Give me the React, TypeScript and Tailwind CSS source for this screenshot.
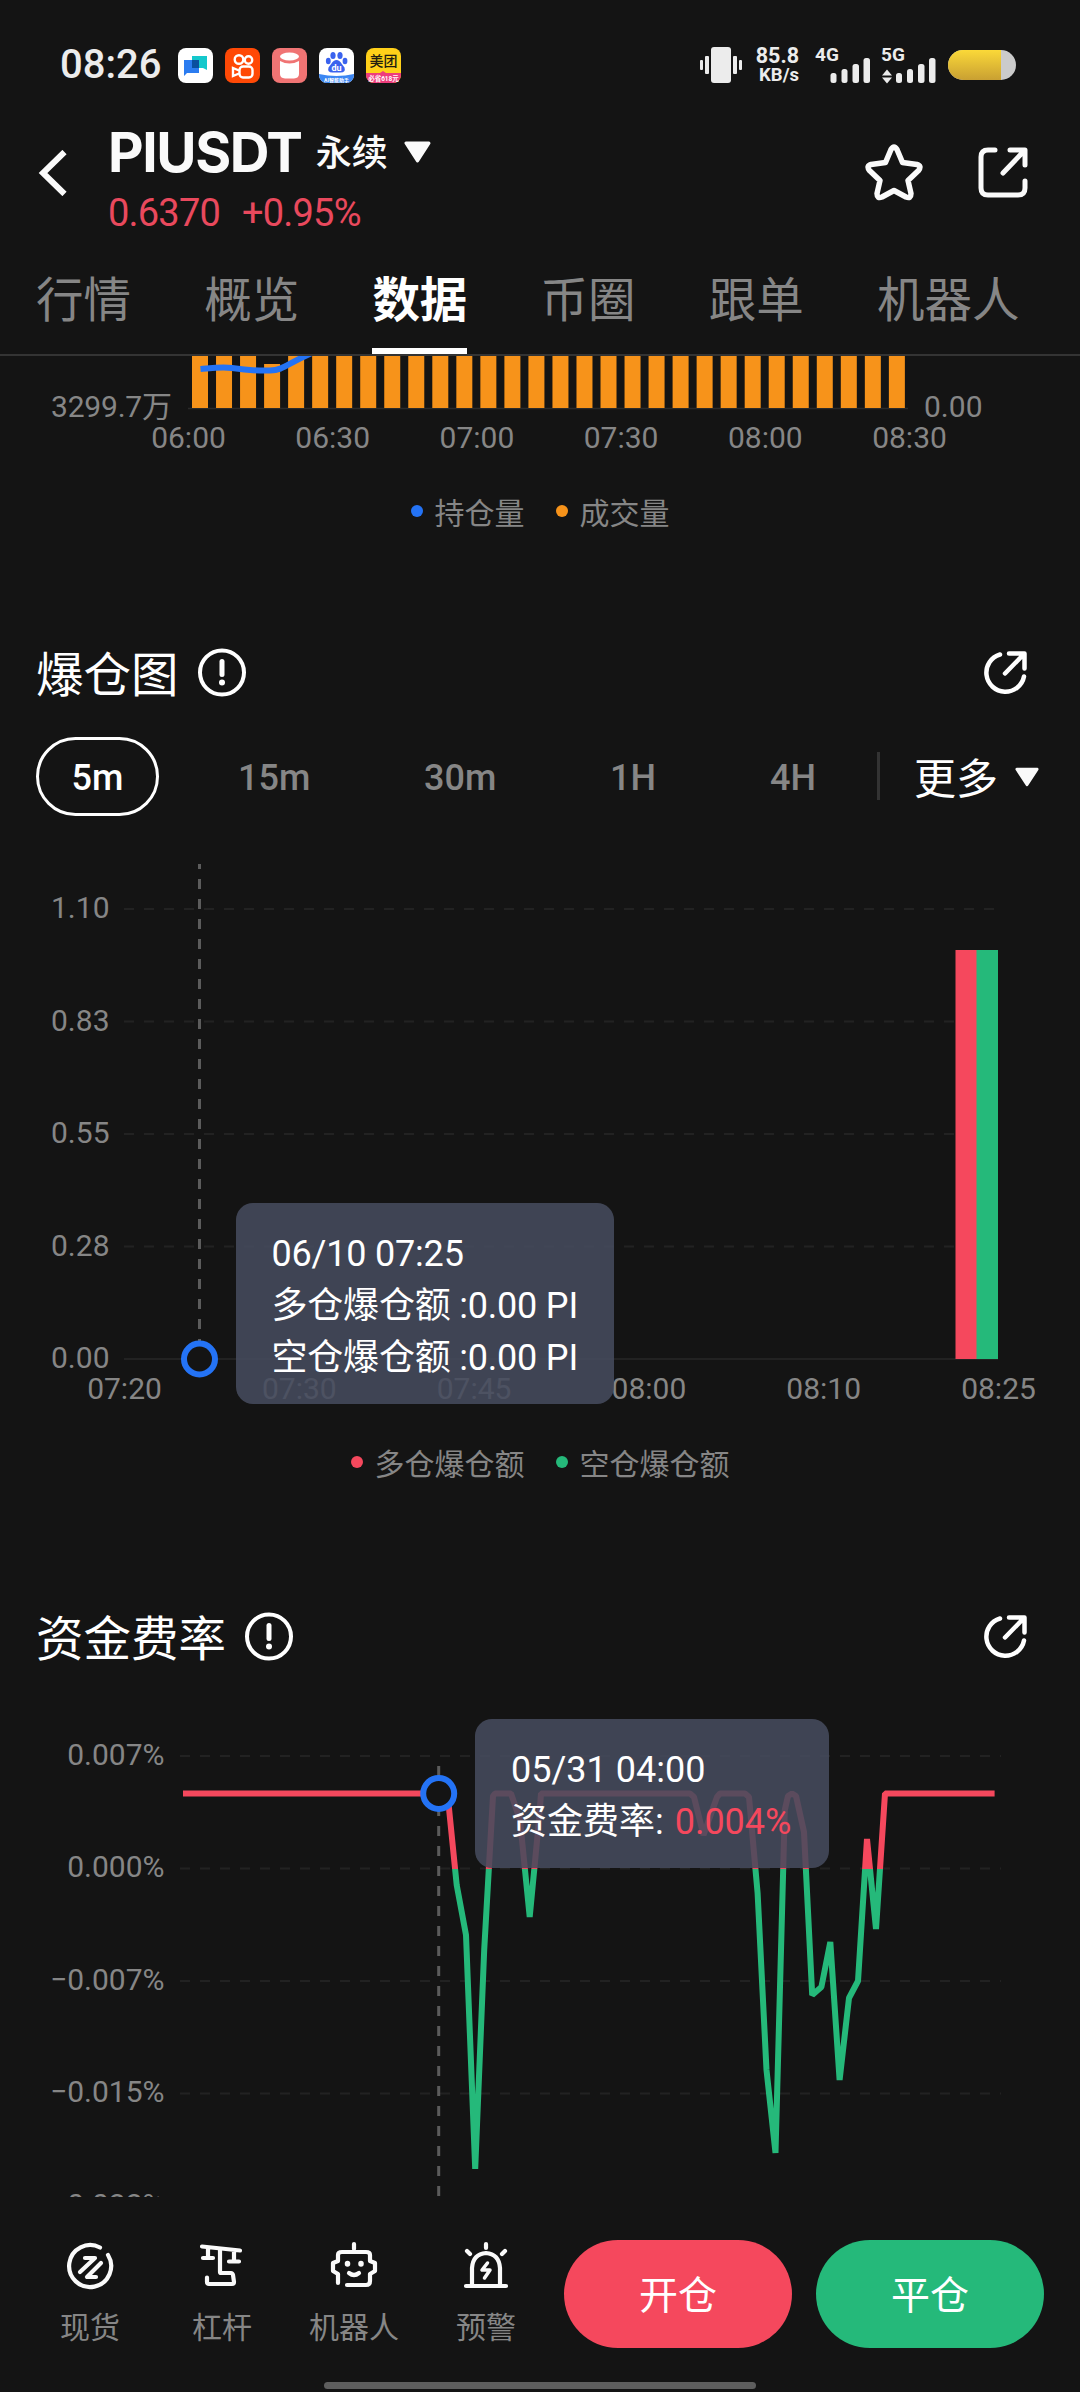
import React from "react";

const RED = "#f5485d";
const GREEN = "#25b97a";
const BLUE = "#2473f5";
const ORANGE = "#f7931a";
const LABEL = "#868686";

const TABS = ["行情", "概览", "数据", "币圈", "跟单", "机器人"];
const VOLUME_TIMES = ["06:00", "06:30", "07:00", "07:30", "08:00", "08:30"];
const VOLUME_BARS = Array.from({ length: 30 }, (_, i) => (i === 3 ? 44 : 52));
const LIQ_LEVELS = ["1.10", "0.83", "0.55", "0.28", "0.00"];
const LIQ_TIMES = ["07:20", "07:30", "07:45", "08:00", "08:10", "08:25"];
const FUNDING_LEVELS = ["0.007%", "0.000%", "−0.007%", "−0.015%", "−0.022%"];

// funding rate series in chart units
const FUNDING_POINTS =
  "183,83.5 447.5,83.5 456.7,175 466,225 475.2,459 484.2,240 493,86 495,83.5 511,83.5 520,110 529.7,207 539,110 541,83.5 690,83.5 694,87 703.5,125 717,87 720,83.5 745,83.5 749,87 757.6,183 766.5,360 775.5,443 784.8,100 788,86 792,83.5 796,86 804,122 812.2,285 821.4,277 830.3,232 839.6,370 849,288 858,271 867,129 876,219 885,83.5 994.6,83.5";

const StatusBar: React.FC = () => (
  <div className="flex h-[130px] shrink-0 items-center pl-[60px] pr-[64px] text-[#ececec]">
    <span className="w-[118px] text-[40px] font-medium leading-none">08:26</span>
    <div className="flex gap-[12px]">
      <svg width="35" height="35" viewBox="0 0 35 35">
        <rect width="35" height="35" rx="8" fill="#fff" />
        <path d="M14 8h15v14l-4-2H14z" fill="#14c8cc" />
        <path d="M6 12h15v13H9l-3 3z" fill="#2b7cf0" />
        <path d="M14 12h7v8h-7z" fill="#0a4f9e" />
      </svg>
      <svg width="35" height="35" viewBox="0 0 35 35" fill="none" stroke="#fff" strokeWidth="2.4">
        <rect width="35" height="35" rx="8" fill="#ff4906" stroke="none" />
        <circle cx="14" cy="11.500" r="4.300" />
        <circle cx="23.500" cy="12" r="3.700" />
        <rect x="14.500" y="18.500" width="13" height="11" rx="3.500" />
        <path d="M14 22.500l-6-2.500v8l6-2.500" />
      </svg>
      <svg width="35" height="35" viewBox="0 0 35 35">
        <rect width="35" height="35" rx="8" fill="#f07474" />
        <path d="M8 13q9.500 5 19 0v13q0 4-5 4.500h-9q-5-.5-5-4.500z" fill="#fff" />
        <ellipse cx="17.500" cy="8.500" rx="9.500" ry="4" fill="#fff" />
      </svg>
      <svg width="35" height="35" viewBox="0 0 35 35">
        <rect width="35" height="35" rx="8" fill="#fff" />
        <g fill="#3a62ee">
          <ellipse cx="14" cy="7.500" rx="2.600" ry="3.600" />
          <ellipse cx="21" cy="7.500" rx="2.600" ry="3.600" />
          <ellipse cx="9.300" cy="13" rx="2.400" ry="3.200" />
          <ellipse cx="26" cy="13" rx="2.400" ry="3.200" />
          <path d="M17.500 12q3 0 5 3.500l3 4q1.500 5-4 5h-8q-5.500 0-4-5l3-4q2-3.500 5-3.500z" />
        </g>
        <text x="17.500" y="23" fill="#fff" fontSize="9" fontWeight="700" textAnchor="middle">du</text>
        <path d="M0 26q17.500 4 35 0v1a8 8 0 0 1-8 8H8a8 8 0 0 1-8-8z" fill="#3b86f3" />
        <text x="17.500" y="33.500" fill="#fff" fontSize="5" fontWeight="700" textAnchor="middle">AI智能助手</text>
      </svg>
      <svg width="35" height="35" viewBox="0 0 35 35">
        <rect width="35" height="35" rx="8" fill="#ffd019" />
        <path d="M0 25h14l3-2 3 2h15v2a8 8 0 0 1-8 8H8a8 8 0 0 1-8-8z" fill="#ee3d7c" />
        <text x="17.500" y="18" fill="#221d10" fontSize="14" fontWeight="500" textAnchor="middle">美团</text>
        <text x="17.500" y="32.500" fill="#fff" fontSize="6.500" fontWeight="700" textAnchor="middle">必省618元</text>
      </svg>
    </div>
    <svg className="ml-auto" width="42" height="36" viewBox="0 0 42 36" fill="#ececec">
      <rect x="11" width="20" height="36" rx="3" />
      <rect y="13" width="3" height="10" rx="1" />
      <rect x="5" y="9" width="4" height="18" rx="1" />
      <rect x="33" y="9" width="4" height="18" rx="1" />
      <rect x="39" y="13" width="3" height="10" rx="1" />
    </svg>
    <div className="ml-[13px] flex w-[44px] flex-col items-end text-[21.5px] font-bold leading-[20px]">
      <span>85.8</span>
      <span className="text-[18.5px] leading-[19px]">KB/s</span>
    </div>
    <svg className="ml-[17px] overflow-visible" width="56" height="36" viewBox="0 0 56 36" fill="#ececec">
      <text x="-1" y="14" fontSize="19" fontWeight="700">4G</text>
      <rect x="14.500" y="26" width="6" height="10" rx="2.500" />
      <rect x="25.500" y="22" width="6" height="14" rx="2.500" />
      <rect x="36.500" y="17" width="6.500" height="19" rx="2.500" />
      <rect x="47.500" y="11" width="6.500" height="25" rx="2.500" />
    </svg>
    <svg className="ml-[9px] overflow-visible" width="56" height="36" viewBox="0 0 56 36" fill="#ececec">
      <text x="0" y="14" fontSize="19" fontWeight="700">5G</text>
      <path d="M1 28.500l5-6 5 6zM1 30.500l5 6 5-6z" />
      <rect x="15" y="26" width="6" height="10" rx="2.500" />
      <rect x="26" y="22" width="6" height="14" rx="2.500" />
      <rect x="37" y="17" width="6.500" height="19" rx="2.500" />
      <rect x="48" y="11" width="6.500" height="25" rx="2.500" />
    </svg>
    <div className="ml-[11px] h-[30px] w-[68px] overflow-hidden rounded-full bg-[#cbcbcb]">
      <div className="h-full w-[53px] bg-linear-to-b from-[#fbd938] to-[#c9a032]" />
    </div>
  </div>
);

const Caret: React.FC<{ width: number; height: number }> = ({ width, height }) => (
  <svg width={width} height={height} viewBox="0 0 26 21">
    <path d="M2 2h22L13 19z" fill="#fafafa" stroke="#fafafa" strokeWidth="3" strokeLinejoin="round" />
  </svg>
);

const Header: React.FC = () => (
  <div className="flex h-[126px] shrink-0 pl-[37px] pr-[51px]">
    <svg className="mt-[20px]" width="30" height="46" viewBox="0 0 30 46" fill="none" stroke="#fafafa" strokeWidth="6">
      <path d="M27.500 2L6 23l21.500 21" />
    </svg>
    <div className="ml-[41px] flex flex-col">
      <div className="flex h-[44px] items-center">
        <span className="font-['Inter'] text-[55px] font-bold leading-none tracking-[-1.4px] text-[#fafafa]">PIUSDT</span>
        <span className="ml-[14px] pt-[3px] text-[36px] font-medium leading-none text-[#fafafa]">永续</span>
        <span className="ml-[16px]">
          <Caret width={27} height={22} />
        </span>
      </div>
      <div className="mt-[17px] flex h-[44px] items-center gap-[22px] text-[38px] leading-none tracking-[-0.8px] text-[#e9495d]">
        <span>0.6370</span>
        <span>+0.95%</span>
      </div>
    </div>
    <div className="ml-auto flex gap-[54px] pt-[14px]">
      <svg width="58" height="58" viewBox="0 0 58 58" fill="none" stroke="#fafafa" strokeWidth="5.500" strokeLinejoin="round">
        <path d="M26 5.500q3-5 6 0l5.500 13 14.500 2q5 1.500 1.500 6L43 36.500l3 13q0 5.500-5 3.500l-12-6.500L17 53q-5 2-5-3.500l3-13L4.500 26.500q-3.500-4.500 1.500-6l14.500-2z" />
      </svg>
      <svg className="mt-[2px]" width="52" height="54" viewBox="0 0 52 54" fill="none" stroke="#fafafa" strokeWidth="5" strokeLinecap="round" strokeLinejoin="round">
        <path d="M18 4h-7q-7 0-7 7v31q0 7 7 7h30q7 0 7-7v-7M33 4h15v15M47 5L26 27" />
      </svg>
    </div>
  </div>
);

const TabBar: React.FC = () => (
  <div className="flex h-[100px] shrink-0 items-end gap-[73.2px] border-b-2 border-[#343434] pl-[36px]">
    {TABS.map((tab) => (
      <div
        key={tab}
        className={
          tab === "数据"
            ? "flex h-[98px] shrink-0 items-start border-b-[6px] border-white pt-[15px] text-[47.5px] font-bold leading-[60px] text-white"
            : "flex h-[98px] shrink-0 items-start pt-[15px] text-[47.5px] leading-[60px] text-[#868686]"
        }
      >
        {tab}
      </div>
    ))}
  </div>
);

const Legend: React.FC<{ items: { color: string; name: string }[] }> = ({ items }) => (
  <div className="flex h-[40px] items-center justify-center gap-[31px] text-[30px] leading-[40px] text-[#868686]">
    {items.map((item) => (
      <div key={item.name} className="flex items-center gap-[12px]">
        <span className="h-[12px] w-[12px] rounded-full" style={{ backgroundColor: item.color }} />
        <span className="pt-[5px]">{item.name}</span>
      </div>
    ))}
  </div>
);

const SectionTitle: React.FC<{ title: string }> = ({ title }) => (
  <div className="flex h-[60px] items-center pl-[36px] pr-[52px] text-white">
    <h2 className="pt-[5px] text-[47.500px] leading-[60px]">{title}</h2>
    <svg className="ml-[18px]" width="50" height="50" viewBox="0 0 50 50" fill="none" stroke="#fff" strokeLinecap="round">
      <circle cx="25" cy="24.500" r="22" strokeWidth="4" />
      <path d="M25 13.500v13" strokeWidth="5" />
      <circle cx="25" cy="34.500" r="3" fill="#fff" stroke="none" />
    </svg>
    <svg className="ml-auto" width="46" height="46" viewBox="0 0 46 46" fill="none" stroke="#fff" strokeWidth="4.500" strokeLinecap="round" strokeLinejoin="round">
      <path d="M18 4.500A19 19 0 1 0 42 26.500M27 3.500h15.500v15M41.500 4.500L23 23.500" />
    </svg>
  </div>
);

const VolumeChart: React.FC = () => (
  <svg className="block" width="1080" height="115" viewBox="0 0 1080 115" fontSize="30" fill={LABEL}>
    <path d="M188 52.500h720" stroke="#2a2a2a" strokeWidth="1.500" />
    {VOLUME_BARS.map((height, i) => (
      <rect key={i} x={192 + i * 24.030} y={52 - height} width="16" height={height} fill={ORANGE} />
    ))}
    <path d="M200.500 13C212 12 222 10.500 232 12S256 15 270 14.500S286 8 314-4" fill="none" stroke={BLUE} strokeWidth="6" />
    <text x="172" y="61" textAnchor="end" textLength="121">3299.7万</text>
    <text x="924" y="61">0.00</text>
    {VOLUME_TIMES.map((time, i) => (
      <text key={time} x={188.500 + i * 144.200} y="92" textAnchor="middle">{time}</text>
    ))}
  </svg>
);

const PeriodPicker: React.FC = () => (
  <div className="flex h-[80px] items-center pl-[36px] text-[36px] font-medium leading-none text-[#868686]">
    <div className="flex h-[79px] w-[123px] items-center justify-center rounded-full border-[3px] border-white pt-[4px] text-white">5m</div>
    <span className="ml-[79px] w-[186px] pt-[4px]">15m</span>
    <span className="w-[186px] pt-[4px]">30m</span>
    <span className="w-[160px] pt-[4px]">1H</span>
    <span className="w-[107px] pt-[4px]">4H</span>
    <span className="h-[48px] w-[3px] bg-[#333]" />
    <span className="ml-[34px] pt-[7px] text-[42px] font-normal text-white">更多</span>
    <span className="ml-[17px] pt-[2px]">
      <Caret width={24} height={20} />
    </span>
  </div>
);

const LiquidationChart: React.FC = () => (
  <div className="relative h-[570px]">
    <svg className="block" width="1080" height="570" viewBox="0 0 1080 570" fontSize="30" fill={LABEL}>
      {LIQ_LEVELS.map((level, i) => (
        <g key={level}>
          <path
            d={`M124 ${59 + i * 112.500}H998`}
            stroke="#222"
            strokeWidth="2"
            strokeDasharray={i === 4 ? undefined : "10 10"}
          />
          <text x="51" y={68 + i * 112.500}>{level}</text>
        </g>
      ))}
      {LIQ_TIMES.map((time, i) => (
        <text key={time} x={124.500 + i * 174.800} y="549" textAnchor="middle">{time}</text>
      ))}
      <rect x="955.500" y="100" width="21.500" height="409" fill={RED} />
      <rect x="976.500" y="100" width="21.500" height="409" fill={GREEN} />
      <path d="M199.500 14V509" stroke="#5c5c5c" strokeWidth="3" strokeDasharray="10 10" strokeDashoffset="5" />
      <circle cx="199.500" cy="509" r="15.500" fill="#141414" stroke={BLUE} strokeWidth="6" />
    </svg>
    <div className="absolute left-[235.5px] top-[353px] h-[201px] w-[378.5px] rounded-[17px] bg-[rgb(70,75,93)]/88 pl-[36px] pt-[25px] text-[36px] leading-[52px] tracking-[-0.2px] text-white">
      <div>06/10 07:25</div>
      <div className="whitespace-nowrap">多仓爆仓额 :0.00 PI</div>
      <div className="whitespace-nowrap">空仓爆仓额 :0.00 PI</div>
    </div>
  </div>
);

const FundingChart: React.FC = () => (
  <div className="relative h-[487px]">
    <svg className="block" width="1080" height="487" viewBox="0 0 1080 487" fontSize="30" fill={LABEL}>
      <defs>
        <linearGradient id="rate" gradientUnits="userSpaceOnUse" x1="0" y1="0" x2="0" y2="320">
          <stop offset="0.498" stopColor={RED} />
          <stop offset="0.498" stopColor={GREEN} />
        </linearGradient>
      </defs>
      {FUNDING_LEVELS.map((level, i) => (
        <g key={level}>
          <path d={`M180 ${46 + i * 112.500}H1001`} stroke="#222" strokeWidth="2" strokeDasharray="10 10" />
          <text x="164.500" y={54.500 + i * 112.500} textAnchor="end">{level}</text>
        </g>
      ))}
      <path d="M438.700 56V487" stroke="#5c5c5c" strokeWidth="3" strokeDasharray="10 10" />
      <polyline points={FUNDING_POINTS} fill="none" stroke="url(#rate)" strokeWidth="6" strokeLinejoin="bevel" />
      <circle cx="438.700" cy="83.500" r="15.500" fill="#141414" stroke={BLUE} strokeWidth="6" />
    </svg>
    <div className="absolute left-[475px] top-[9px] h-[149px] w-[353.5px] rounded-[17px] bg-[rgb(70,75,93)]/88 pl-[36px] pt-[25px] text-[36px] leading-[52px] text-white">
      <div>05/31 04:00</div>
      <div className="whitespace-nowrap">
        资金费率: <span className="ml-[2px] text-[#f5485d]">0.004%</span>
      </div>
    </div>
  </div>
);

const NAV_ITEMS = [
  {
    name: "现货",
    icon: (
      <>
        <path d="M34 6.500A21 21 0 1 0 42 14" />
        <path d="M19 17h10L14 31M35 22L21 36h9" />
      </>
    ),
  },
  {
    name: "杠杆",
    icon: (
      <>
        <path d="M4 5.500l38 4M10 7v10M5 17h10M36 10v10M31 20.500h10" />
        <path d="M22 8v23q0 1 1 1h10q1.500 0 2 2l1 7q0 2-2 2H11q-2 0-2-2v-4.500" />
      </>
    ),
  },
  {
    name: "机器人",
    icon: (
      <>
        <path d="M24 3v5M8 42v-9l-5-3v-8l5-2v-6q0-3 4-3h24q4 0 4 3v6l5 2v8l-5 3v7q0 4-4 4H17" />
        <path d="M19 32q5 4 10 0" />
        <path d="M17.500 22.500v.5M31 22.500v.5" strokeWidth="5.500" />
      </>
    ),
  },
  {
    name: "预警",
    icon: (
      <>
        <path d="M4 45h40M10 44V27q1-14 14-15 13 1 14 15v17M24 3v4M5 10l3 3M43 10l-3 3" />
        <path d="M25.500 22L20 29h8l-5.500 8" strokeWidth="3.500" />
      </>
    ),
  },
];

const BottomBar: React.FC = () => (
  <div className="flex h-[195px] shrink-0 flex-col">
    <div className="flex h-[185px] shrink-0 pl-[24px]">
      {NAV_ITEMS.map((item) => (
        <div key={item.name} className="flex w-[132px] flex-col items-center pt-[44px]">
          <svg width="48" height="50" viewBox="0 0 48 50" fill="none" stroke="#fafafa" strokeWidth="4.200" strokeLinecap="round" strokeLinejoin="round">
            {item.icon}
          </svg>
          <span className="mt-[17px] text-[30px] leading-[40px] text-[#868686]">{item.name}</span>
        </div>
      ))}
      <div className="ml-[12px] mt-[43px] flex gap-[24px] text-[39px] leading-none text-white">
        <button className="h-[108px] w-[228px] rounded-full bg-[#f5485d] pt-[5px]">开仓</button>
        <button className="h-[108px] w-[228px] rounded-full bg-[#25b97a] pt-[5px]">平仓</button>
      </div>
    </div>
    <div className="mx-auto h-[7px] w-[432px] rounded-full bg-[#5e5e5e]" />
  </div>
);

export default function App() {
  return (
    <div className="flex h-[2392px] w-[1080px] flex-col overflow-hidden bg-[#141414] font-['Roboto','Noto_Sans_CJK_SC',sans-serif]">
      <StatusBar />
      <Header />
      <TabBar />
      <div className="flex h-[1841px] shrink-0 flex-col overflow-hidden">
        <div className="h-[287px] shrink-0">
          <VolumeChart />
          <div className="pt-[20px]">
            <Legend
              items={[
                { color: BLUE, name: "持仓量" },
                { color: ORANGE, name: "成交量" },
              ]}
            />
          </div>
        </div>
        <div className="h-[964px] shrink-0">
          <SectionTitle title="爆仓图" />
          <div className="pb-[34px] pt-[33px]">
            <PeriodPicker />
          </div>
          <LiquidationChart />
          <div className="pt-[22px]">
            <Legend
              items={[
                { color: RED, name: "多仓爆仓额" },
                { color: GREEN, name: "空仓爆仓额" },
              ]}
            />
          </div>
        </div>
        <div className="shrink-0">
          <SectionTitle title="资金费率" />
          <div className="pt-[43px]">
            <FundingChart />
          </div>
        </div>
      </div>
      <BottomBar />
    </div>
  );
}
